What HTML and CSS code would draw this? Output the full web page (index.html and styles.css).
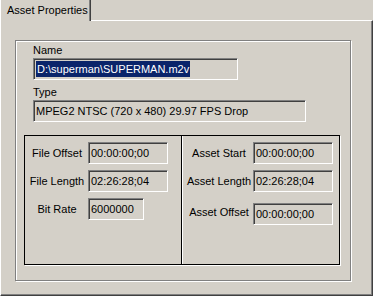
FILE: index.html
```html
<!DOCTYPE html>
<html lang="en">
<head>
    <meta charset="UTF-8">
    <meta name="viewport" content="width=device-width, initial-scale=1.0">
    <title>Asset Properties</title>
    <link rel="stylesheet" href="styles.css">
</head>
<body>
    <div class="tabs">
        <div class="tab">Asset Properties</div>
    </div>
    <div class="page">
        <div class="group">
            <div class="info">
                <div class="label">Name</div>
                <div class="field name-field"><span class="selected">D:\superman\SUPERMAN.m2v</span></div>
                <div class="label">Type</div>
                <div class="field type-field">MPEG2 NTSC (720 x 480) 29.97 FPS Drop</div>
            </div>
            <div class="times">
                <div class="times-col left-col">
                    <span class="row-label">File Offset</span>
                    <div class="field time">00:00:00;00</div>
                    <span class="row-label">File Length</span>
                    <div class="field time">02:26:28;04</div>
                    <span class="row-label">Bit Rate</span>
                    <div class="field rate">6000000</div>
                </div>
                <div class="times-col right-col">
                    <span class="row-label">Asset Start</span>
                    <div class="field time">00:00:00;00</div>
                    <span class="row-label">Asset Length</span>
                    <div class="field time">02:26:28;04</div>
                    <span class="row-label">Asset Offset</span>
                    <div class="field time lower">00:00:00;00</div>
                </div>
            </div>
        </div>
    </div>
</body>
</html>
```

FILE: styles.css
```css
body {
    margin: 0;
    width: 373px;
    height: 296px;
    overflow: hidden;
    background-color: #d4d0c8;
    font-family: "Liberation Sans", Arial, sans-serif;
    font-size: 11px;
    color: #000;
}

.tabs {
    display: flex;
    height: 20px;
}

.tab {
    position: relative;
    z-index: 1;
    width: 91px;
    height: 21px;
    box-sizing: border-box;
    padding-left: 6px;
    line-height: 20px;
    background-color: #d4d0c8;
    border-left: 1px solid #fff;
    border-right: 1px solid #404040;
    box-shadow: inset -1px 0 #808080;
}

.page {
    height: 276px;
    box-sizing: border-box;
    border: 1px solid;
    border-color: #fff #404040 #404040 #fff;
    box-shadow: inset -1px -1px #808080;
    padding: 19px 0 0 14px;
}

.group {
    width: 336px;
    height: 241px;
    box-sizing: border-box;
    border: 1px solid #808080;
    box-shadow: inset 1px 1px #fff, 1px 1px #fff;
    padding: 3px 0 0 8px;
}

.info {
    padding-left: 9px;
}

.label {
    height: 13px;
    line-height: 13px;
    margin-bottom: 1px;
}

/* sunken read-only edit box */
.field {
    height: 22px;
    box-sizing: border-box;
    border: 1px solid;
    border-color: #808080 #fff #fff #808080;
    box-shadow: inset 1px 1px #404040, inset -1px -1px #d4d0c8;
    padding-left: 2px;
    line-height: 20px;
    white-space: nowrap;
}

.name-field {
    width: 205px;
    margin-bottom: 6px;
}

.selected {
    display: inline-block;
    margin-top: 1px;
    padding: 0 1px;
    line-height: 16px;
    background-color: #0a246a;
    color: #fff;
}

.type-field {
    width: 273px;
    margin-bottom: 13px;
}

.times {
    display: flex;
    width: 316px;
    height: 130px;
    box-sizing: border-box;
    border: 1px solid #000;
    box-shadow: 1px 1px #fff;
}

.times-col {
    display: grid;
    align-content: start;
    align-items: center;
    row-gap: 6px;
    padding-top: 6px;
    box-sizing: border-box;
}

.left-col {
    width: 157px;
    grid-template-columns: 56px 80px;
    column-gap: 3px;
    padding-left: 4px;
    border-right: 1px solid #000;
    box-shadow: 1px 0 #fff;
}

.right-col {
    flex: 1;
    grid-template-columns: 66px 80px;
    column-gap: 1px;
    padding-left: 4px;
}

.row-label {
    text-align: center;
    white-space: nowrap;
}

.time {
    width: 80px;
}

.rate {
    width: 56px;
}

.lower {
    margin-top: 5px;
}
```
